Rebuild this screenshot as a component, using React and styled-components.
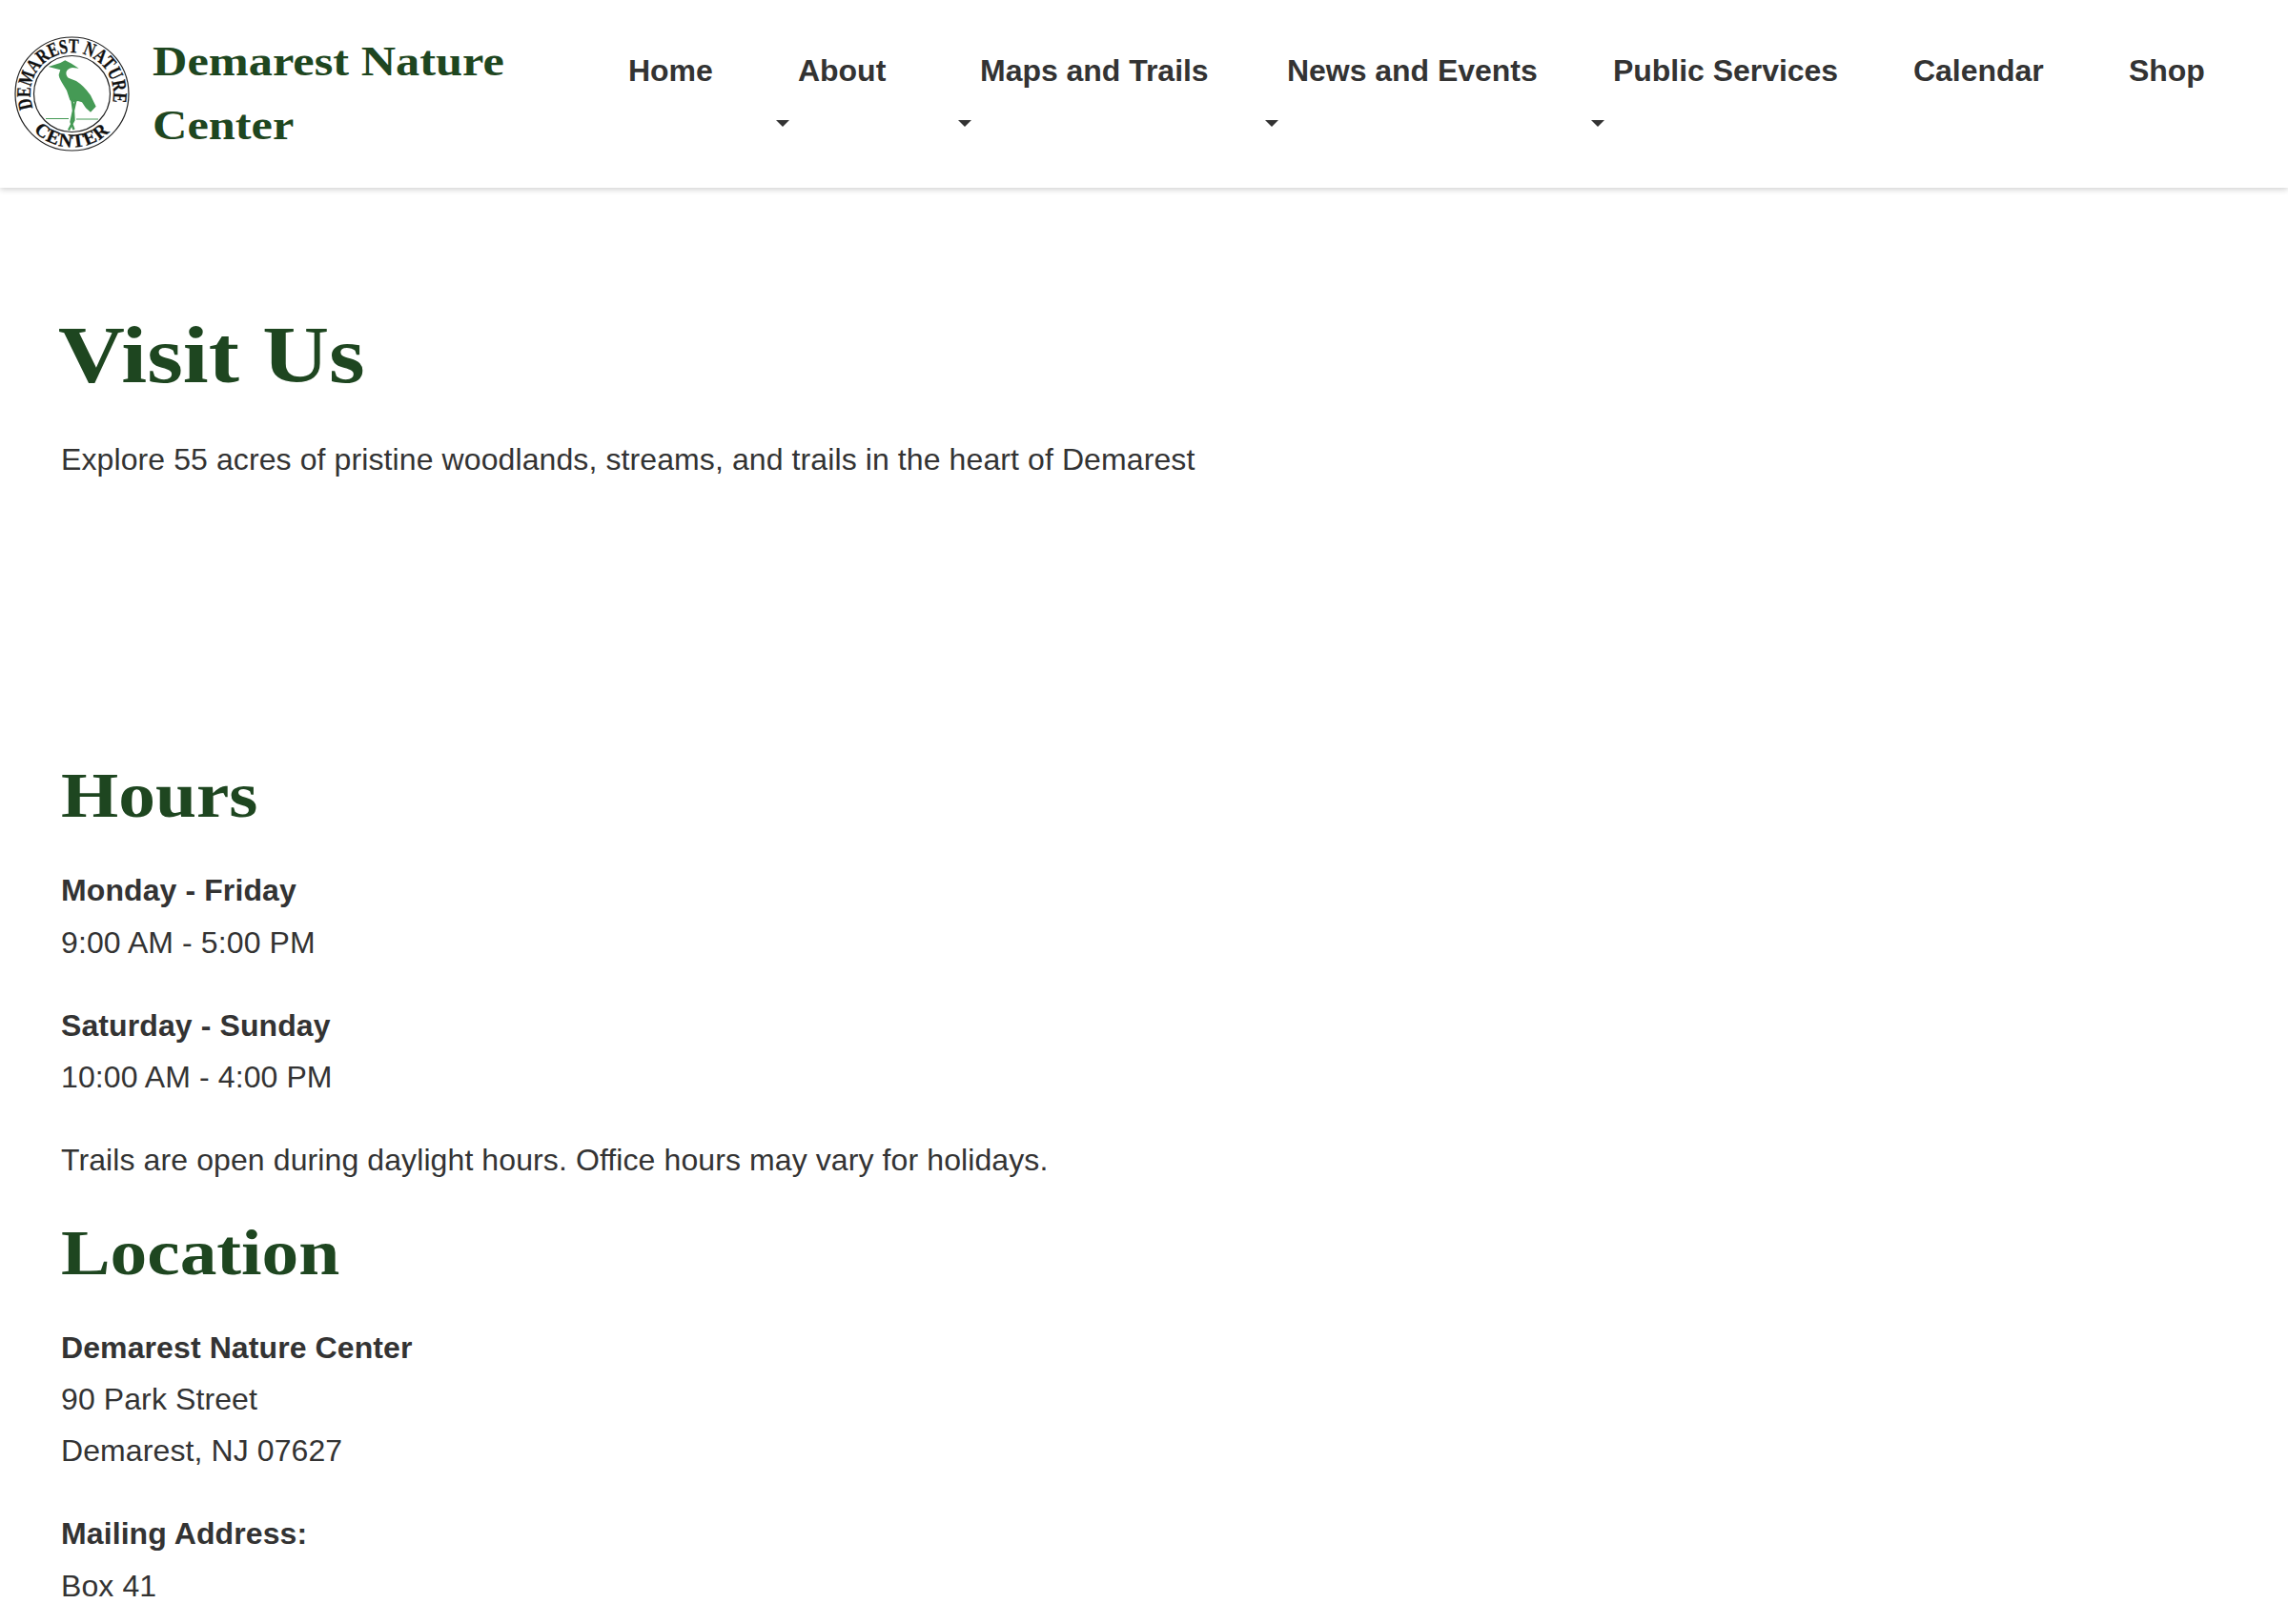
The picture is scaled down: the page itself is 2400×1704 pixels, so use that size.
import React from "react"
import styled, { createGlobalStyle } from "styled-components"

const GlobalStyle = createGlobalStyle`
  html, body {
    margin: 0;
    padding: 0;
    background: #fff;
  }
  body {
    font-family: "Liberation Sans", Arial, sans-serif;
    font-size: 32px;
    line-height: 54.4px;
    letter-spacing: 0.1px;
    color: #333;
    height: 1704px;
    overflow: hidden;
  }
`

const Header = styled.header`
  height: 197px;
  display: flex;
  align-items: flex-start;
  background: #fff;
  box-shadow: 0 2px 6px rgba(0, 0, 0, 0.18);
`

const Brand = styled.a`
  display: flex;
  align-items: center;
  gap: 24px;
  margin: 31px 0 0 15px;
  width: 530px;
  flex: none;
`

const LogoSvg = styled.svg`
  width: 121px;
  height: 121px;
  flex: none;
`

const BrandName = styled.div`
  font-family: "Liberation Serif", Georgia, serif;
  font-weight: 700;
  font-size: 44px;
  line-height: 67px;
  letter-spacing: 0;
  color: #1e4620;
  width: 340px;
  transform: scaleX(1.145);
  transform-origin: left center;
`

const Nav = styled.nav`
  display: flex;
  margin: 46px 0 0 114px;
`

const NavItem = styled.a`
  display: flex;
  flex-direction: column;
  align-items: flex-start;
  width: ${props => props.$width}px;
  flex: none;
  font-weight: 700;
  font-size: 32px;
  line-height: 56px;
  letter-spacing: -0.03px;
  color: #333;
`

const Caret = styled.span`
  width: 0;
  height: 0;
  margin: 24px 0 0 -23px;
  border-top: 7px solid #333;
  border-left: 7px solid transparent;
  border-right: 7px solid transparent;
`

const Main = styled.main`
  padding: 116px 64px 0;
`

const Title = styled.h1`
  width: fit-content;
  margin: 0 0 0 -3px;
  font-family: "Liberation Serif", Georgia, serif;
  font-weight: 700;
  font-size: 84px;
  line-height: 120px;
  letter-spacing: 0;
  color: #1e4620;
  transform: scaleX(1.152);
  transform-origin: left center;
`

const Lead = styled.p`
  margin: 22px 0 0;
`

const Section = styled.section`
  margin-top: ${props => props.$top}px;
`

const Heading = styled.h2`
  width: fit-content;
  margin: 0 0 36px;
  font-family: "Liberation Serif", Georgia, serif;
  font-weight: 700;
  font-size: 67px;
  line-height: 74px;
  letter-spacing: 0;
  color: #1e4620;
  transform: scaleX(1.155);
  transform-origin: left center;
`

const Block = styled.p`
  margin: 0 0 32.4px;
`

const Label = styled.strong`
  display: block;
  font-weight: 700;
`

function Logo() {
  return (
    <LogoSvg viewBox="0 0 121 121" aria-hidden="true">
      <defs>
        <path id="ring-top" d="M 19.6 75.4 A 43.5 43.5 0 1 1 103 70" />
        <path id="ring-bottom" d="M 16.4 95 A 56 56 0 0 0 104.6 95" />
      </defs>
      <circle cx="60.5" cy="60.5" r="59.5" fill="#fff" stroke="#222" strokeWidth="1.2" />
      <circle cx="60.5" cy="60.5" r="40" fill="#fff" stroke="#222" strokeWidth="1.2" />
      <text fontFamily="Liberation Serif, serif" fontWeight="700" fontSize="21" letterSpacing="0" fill="#111" stroke="#111" strokeWidth="0.3">
        <textPath href="#ring-top" textLength="160" lengthAdjust="spacingAndGlyphs">DEMAREST NATURE</textPath>
      </text>
      <text fontFamily="Liberation Serif, serif" fontWeight="700" fontSize="20" letterSpacing="1" fill="#111" stroke="#111" strokeWidth="0.3">
        <textPath href="#ring-bottom" startOffset="50%" textAnchor="middle">CENTER</textPath>
      </text>
      <path
        fill="#459a55"
        d="M35.7 32 L48.3 28 L53.3 25.3 L60 28.7 L67.7 33.7 L61 33 Q56 33.5 54.5 37.5 Q54 41.5 56.7 43.7 L65 47 Q73 52 80 62 L85.7 73.7 L80 79.7 L75 75.3 L71 69.3 L66.7 68 L61 69.3 L58.3 67 L55 57 L50 48.7 Q46.5 43 46.7 40.3 L48.3 35.3 Z"
      />
      <path d="M64.5 67 L62 78 L59.5 90 L62.5 98 M60.5 67 L62 78 L62.5 88 L57 98.5" stroke="#459a55" strokeWidth="2.4" fill="none" />
      <path d="M33 86.5 H57 M65 87 H88" stroke="#459a55" strokeWidth="1" fill="none" />
    </LogoSvg>
  )
}

const navItems = [
  { label: "Home", width: 178 },
  { label: "About", width: 191, caret: true },
  { label: "Maps and Trails", width: 322, caret: true },
  { label: "News and Events", width: 342, caret: true },
  { label: "Public Services", width: 315, caret: true },
  { label: "Calendar", width: 226 },
  { label: "Shop", width: 90 },
]

export default function App() {
  return (
    <>
      <GlobalStyle />
      <Header>
        <Brand>
          <Logo />
          <BrandName>Demarest Nature Center</BrandName>
        </Brand>
        <Nav>
          {navItems.map(item => (
            <NavItem key={item.label} $width={item.width}>
              {item.label}
              {item.caret && <Caret />}
            </NavItem>
          ))}
        </Nav>
      </Header>
      <Main>
        <Title>Visit Us</Title>
        <Lead>Explore 55 acres of pristine woodlands, streams, and trails in the heart of Demarest</Lead>
        <Section $top={288}>
          <Heading>Hours</Heading>
          <Block>
            <Label>Monday - Friday</Label>
            9:00 AM - 5:00 PM
          </Block>
          <Block>
            <Label>Saturday - Sunday</Label>
            10:00 AM - 4:00 PM
          </Block>
          <Block>Trails are open during daylight hours. Office hours may vary for holidays.</Block>
        </Section>
        <Section $top={0}>
          <Heading>Location</Heading>
          <Block>
            <Label>Demarest Nature Center</Label>
            90 Park Street
            <br />
            Demarest, NJ 07627
          </Block>
          <Block>
            <Label>Mailing Address:</Label>
            Box 41
          </Block>
        </Section>
      </Main>
    </>
  )
}
